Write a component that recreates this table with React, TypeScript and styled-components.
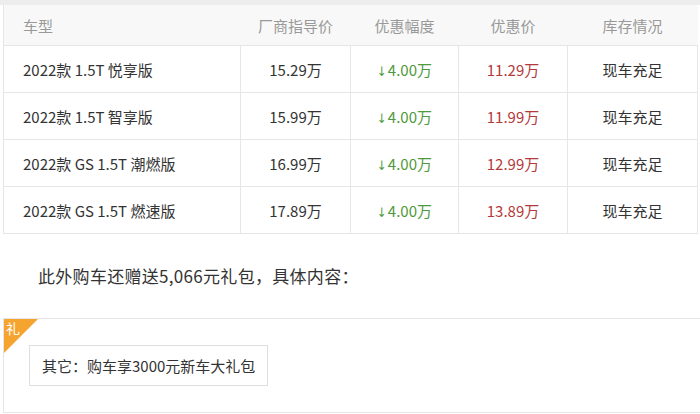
import React from "react";
import styled, { createGlobalStyle } from "styled-components";

const GlobalStyle = createGlobalStyle`
  body {
    margin: 0;
    background: #fff;
    font-family: "Noto Sans CJK SC", "Noto Sans", sans-serif;
    color: #333;
  }
`;

interface Trim {
  name: string;
  msrp: string;
  cut: string;
  price: string;
  stock: string;
}

const trims: Trim[] = [
  { name: "2022款 1.5T 悦享版", msrp: "15.29万", cut: "4.00万", price: "11.29万", stock: "现车充足" },
  { name: "2022款 1.5T 智享版", msrp: "15.99万", cut: "4.00万", price: "11.99万", stock: "现车充足" },
  { name: "2022款 GS 1.5T 潮燃版", msrp: "16.99万", cut: "4.00万", price: "12.99万", stock: "现车充足" },
  { name: "2022款 GS 1.5T 燃速版", msrp: "17.89万", cut: "4.00万", price: "13.89万", stock: "现车充足" },
];

const columns = ["车型", "厂商指导价", "优惠幅度", "优惠价", "库存情况"];
const widths = [237, 110, 108, 109, 130];

const Page = styled.div`
  width: 700px;
  overflow: hidden;
  border-top: 5px solid #ededed;
`;

const Table = styled.table`
  margin-left: 3px;
  width: 694px;
  border-collapse: collapse;
  table-layout: fixed;
  font-size: 15px;
`;

const HeadCell = styled.th<{ $left?: boolean }>`
  height: 40px;
  padding: 0 0 0 ${(p) => (p.$left ? "19px" : "0")};
  background: #f8f8f8;
  color: #999;
  font-weight: normal;
  text-align: ${(p) => (p.$left ? "left" : "center")};
  border-bottom: 1px solid #e6e6e6;
  border-left: ${(p) => (p.$left ? "1px solid #e6e6e6" : "none")};
`;

const Cell = styled.td<{ $left?: boolean; $tone?: "green" | "red" }>`
  height: 46px;
  padding: 0 0 0 ${(p) => (p.$left ? "19px" : "0")};
  border: 1px solid #e6e6e6;
  text-align: ${(p) => (p.$left ? "left" : "center")};
  color: ${(p) => (p.$tone === "green" ? "#4f9a3c" : p.$tone === "red" ? "#b33a3a" : "#333")};
  white-space: nowrap;
`;

const Arrow = styled.span`
  font-family: "DejaVu Sans Condensed", "DejaVu Sans", sans-serif;
  font-size: 13px;
  margin-right: 1px;
`;

const Note = styled.p`
  margin: 30px 0 0 38px;
  font-size: 17px;
  line-height: 24px;
  color: #333;
  letter-spacing: 0.3px;
`;

const GiftBox = styled.div`
  position: relative;
  margin: 30px 0 0 3px;
  height: 95px;
  border: 1px solid #e6e6e6;
  border-right: none;
  padding: 26px 0 0 25px;
  box-sizing: border-box;
`;

const Corner = styled.div`
  position: absolute;
  left: 0;
  top: 0;
  width: 0;
  height: 0;
  border-top: 34px solid #f5a430;
  border-right: 34px solid transparent;
`;

const CornerText = styled.span`
  position: absolute;
  left: 2px;
  top: 1px;
  font-size: 14px;
  line-height: 16px;
  color: #fff;
`;

const GiftItem = styled.div`
  display: inline-block;
  height: 41px;
  line-height: 39px;
  padding: 0 12px;
  border: 1px solid #dedede;
  box-sizing: border-box;
  font-size: 15px;
  color: #333;
`;

export default function App() {
  return (
    <Page>
      <GlobalStyle />
      <Table>
        <colgroup>
          {widths.map((w, i) => (
            <col key={i} style={{ width: w }} />
          ))}
        </colgroup>
        <thead>
          <tr>
            {columns.map((c, i) => (
              <HeadCell key={c} $left={i === 0}>
                {c}
              </HeadCell>
            ))}
          </tr>
        </thead>
        <tbody>
          {trims.map((t) => (
            <tr key={t.name}>
              <Cell $left>{t.name}</Cell>
              <Cell>{t.msrp}</Cell>
              <Cell $tone="green">
                <Arrow>↓</Arrow>
                {t.cut}
              </Cell>
              <Cell $tone="red">{t.price}</Cell>
              <Cell>{t.stock}</Cell>
            </tr>
          ))}
        </tbody>
      </Table>
      <Note>此外购车还赠送5,066元礼包，具体内容：</Note>
      <GiftBox>
        <Corner />
        <CornerText>礼</CornerText>
        <GiftItem>其它：购车享3000元新车大礼包</GiftItem>
      </GiftBox>
    </Page>
  );
}
